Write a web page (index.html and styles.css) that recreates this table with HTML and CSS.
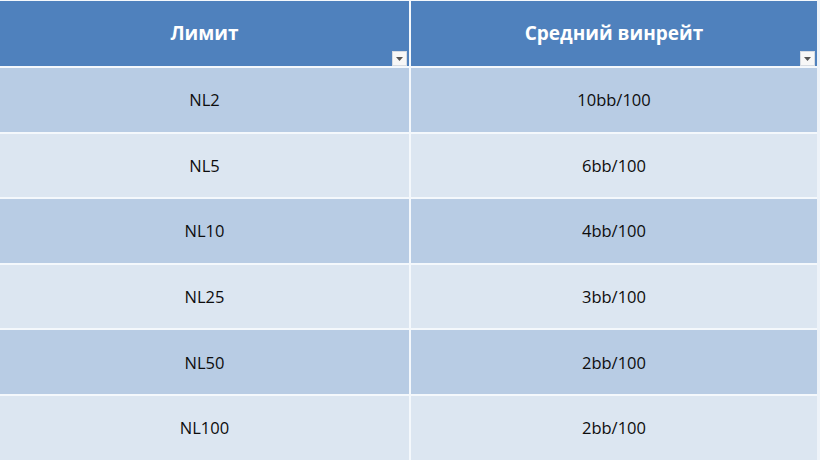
FILE: index.html
```html
<!DOCTYPE html>
<html lang="ru">
<head>
<meta charset="utf-8">
<link rel="stylesheet" href="styles.css">
</head>
<body>
<div class="table">
  <div class="cell head">Лимит<span class="filter"><svg width="7" height="4" viewBox="0 0 7 4"><path d="M0 0h7L3.5 4z" fill="#555"/></svg></span></div>
  <div class="cell head">Средний винрейт<span class="filter"><svg width="7" height="4" viewBox="0 0 7 4"><path d="M0 0h7L3.5 4z" fill="#555"/></svg></span></div>
  <div class="cell dark">NL2</div><div class="cell dark">10bb/100</div>
  <div class="cell light">NL5</div><div class="cell light">6bb/100</div>
  <div class="cell dark">NL10</div><div class="cell dark">4bb/100</div>
  <div class="cell light">NL25</div><div class="cell light">3bb/100</div>
  <div class="cell dark">NL50</div><div class="cell dark">2bb/100</div>
  <div class="cell light">NL100</div><div class="cell light">2bb/100</div>
</div>
</body>
</html>
```
FILE: styles.css
```css
html, body {
  margin: 0;
  padding: 0;
  background: #eef3f9;
  overflow: hidden;
}
.table {
  width: 817px;
  height: 460px;
  padding-top: 1px;
  box-sizing: border-box;
  display: grid;
  grid-template-columns: 409px 406px;
  grid-template-rows: 65px repeat(6, 63.6px);
  column-gap: 2px;
  row-gap: 2px;
  background: #f4f8fc;
  border-right: 2px solid #f4f8fc;
  font-family: "Open Sans", "Liberation Sans", sans-serif;
  color: #0d0d0d;
}
.cell {
  position: relative;
  display: flex;
  align-items: center;
  justify-content: center;
  font-size: 16.5px;
}
.head {
  background: #4f81bd;
  color: #fff;
  font-weight: 700;
  font-size: 19px;
  padding-bottom: 1px;
}
.dark { background: #b8cce4; }
.light { background: #dce6f1; }
.filter {
  position: absolute;
  right: 2px;
  bottom: 0;
  width: 15px;
  height: 15px;
  background: #f7f7f7;
  border: 1px solid #d6dbe2;
  box-sizing: border-box;
  display: flex;
  align-items: center;
  justify-content: center;
}
```
